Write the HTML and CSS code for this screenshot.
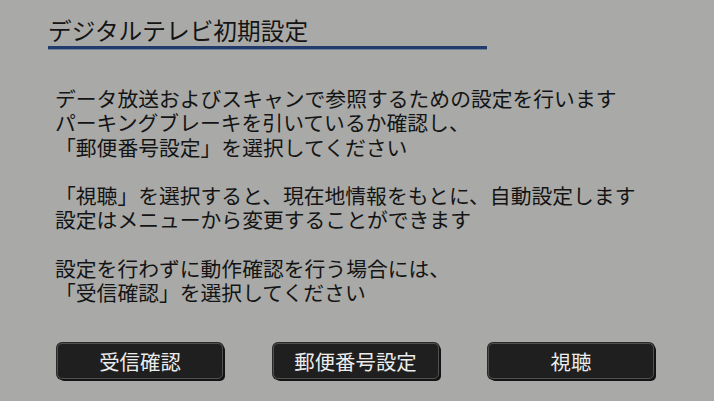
FILE: index.html
```html
<!DOCTYPE html>
<html lang="ja">
<head>
<meta charset="utf-8">
<link rel="stylesheet" href="styles.css">
</head>
<body>
<div class="screen">
  <div class="header"><h1 class="title">デジタルテレビ初期設定</h1></div>
  <div class="message">
    <p class="para">データ放送およびスキャンで参照するための設定を行います<br>パーキングブレーキを引いているか確認し、<br>「郵便番号設定」を選択してください</p>
    <p class="para">「視聴」を選択すると、現在地情報をもとに、自動設定します<br>設定はメニューから変更することができます</p>
    <p class="para">設定を行わずに動作確認を行う場合には、<br>「受信確認」を選択してください</p>
  </div>
  <div class="buttons">
    <div class="btn">受信確認</div>
    <div class="btn">郵便番号設定</div>
    <div class="btn">視聴</div>
  </div>
</div>
</body>
</html>
```
FILE: styles.css
```css
html, body {
  margin: 0;
  padding: 0;
}
body {
  background: #a9aaa8;
  font-family: "Noto Sans CJK JP", "Noto Sans", sans-serif;
  color: #141414;
}
.screen {
  width: 714px;
  height: 401px;
  overflow: hidden;
  display: flex;
  flex-direction: column;
}
.header {
  padding: 14px 0 0 48px;
}
.title {
  margin: 0;
  width: 439px;
  font-size: 23.7px;
  font-weight: 400;
  line-height: 32px;
  border-bottom: 3px solid #213c6c;
  box-shadow: 0 1px 0 #6f7f98;
}
.message {
  padding: 37px 0 0 55px;
  font-size: 20.8px;
  line-height: 24.3px;
}
.para {
  margin: 0 0 24.3px 0;
}
.buttons {
  display: flex;
  gap: 49.5px;
  padding: 14px 0 0 57px;
}
.btn {
  width: 164px;
  height: 34px;
  border: 1px solid #505050;
  border-radius: 5px;
  background: #1e1f1e;
  box-shadow: 2px 2px 0 #141414, 0 0 0 1px #2a2a2a;
  color: #ececec;
  font-size: 20.4px;
  line-height: 34px;
  text-align: center;
}
```
